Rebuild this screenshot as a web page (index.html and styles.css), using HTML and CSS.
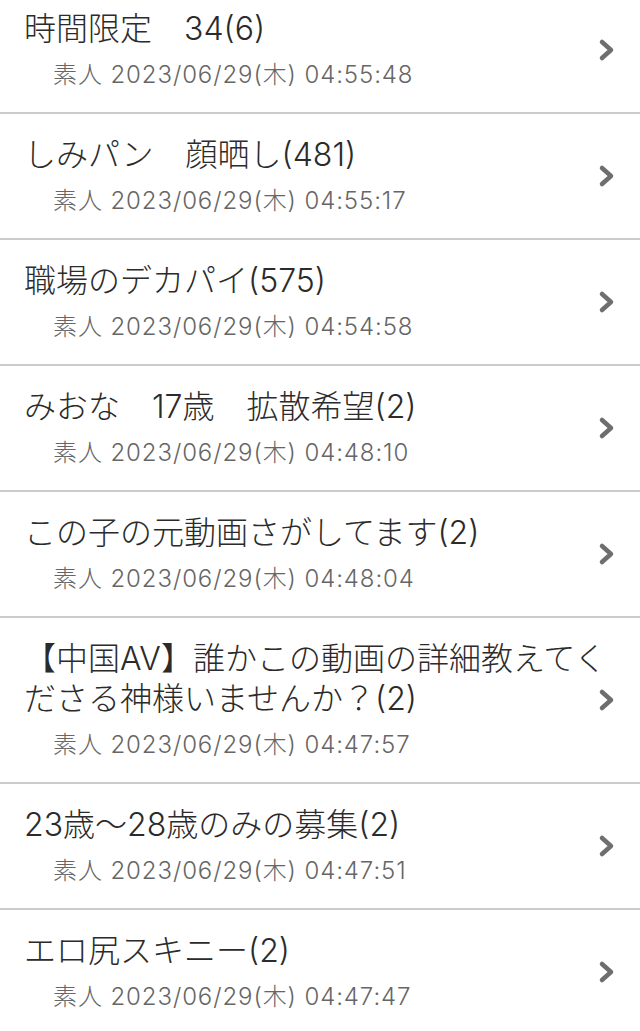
FILE: index.html
```html
<!DOCTYPE html>
<html lang="ja">
<head>
    <meta charset="UTF-8">
    <meta name="viewport" content="width=device-width, initial-scale=1.0">
    <title>スレッド一覧</title>
    <link rel="stylesheet" href="styles.css">
</head>
<body>
    <ul id="thread-list">
        <li class="thread-item">
            <a class="thread-link" href="#">
                <div class="thread-body">
                    <div class="thread-title">時間限定　34(6)</div>
                    <div class="thread-meta">素人 2023/06/29(木) 04:55:48</div>
                </div>
                <svg class="chevron" viewBox="0 0 20 24"><path d="M5 4 L14 12 L5 20"/></svg>
            </a>
        </li>
        <li class="thread-item">
            <a class="thread-link" href="#">
                <div class="thread-body">
                    <div class="thread-title">しみパン　顔晒し(481)</div>
                    <div class="thread-meta">素人 2023/06/29(木) 04:55:17</div>
                </div>
                <svg class="chevron" viewBox="0 0 20 24"><path d="M5 4 L14 12 L5 20"/></svg>
            </a>
        </li>
        <li class="thread-item">
            <a class="thread-link" href="#">
                <div class="thread-body">
                    <div class="thread-title">職場のデカパイ(575)</div>
                    <div class="thread-meta">素人 2023/06/29(木) 04:54:58</div>
                </div>
                <svg class="chevron" viewBox="0 0 20 24"><path d="M5 4 L14 12 L5 20"/></svg>
            </a>
        </li>
        <li class="thread-item">
            <a class="thread-link" href="#">
                <div class="thread-body">
                    <div class="thread-title">みおな　17歳　拡散希望(2)</div>
                    <div class="thread-meta">素人 2023/06/29(木) 04:48:10</div>
                </div>
                <svg class="chevron" viewBox="0 0 20 24"><path d="M5 4 L14 12 L5 20"/></svg>
            </a>
        </li>
        <li class="thread-item">
            <a class="thread-link" href="#">
                <div class="thread-body">
                    <div class="thread-title">この子の元動画さがしてます(2)</div>
                    <div class="thread-meta">素人 2023/06/29(木) 04:48:04</div>
                </div>
                <svg class="chevron" viewBox="0 0 20 24"><path d="M5 4 L14 12 L5 20"/></svg>
            </a>
        </li>
        <li class="thread-item">
            <a class="thread-link" href="#">
                <div class="thread-body">
                    <div class="thread-title">【中国AV】誰かこの動画の詳細教えてくださる神様いませんか？(2)</div>
                    <div class="thread-meta">素人 2023/06/29(木) 04:47:57</div>
                </div>
                <svg class="chevron" viewBox="0 0 20 24"><path d="M5 4 L14 12 L5 20"/></svg>
            </a>
        </li>
        <li class="thread-item">
            <a class="thread-link" href="#">
                <div class="thread-body">
                    <div class="thread-title">23歳〜28歳のみの募集(2)</div>
                    <div class="thread-meta">素人 2023/06/29(木) 04:47:51</div>
                </div>
                <svg class="chevron" viewBox="0 0 20 24"><path d="M5 4 L14 12 L5 20"/></svg>
            </a>
        </li>
        <li class="thread-item">
            <a class="thread-link" href="#">
                <div class="thread-body">
                    <div class="thread-title">エロ尻スキニー(2)</div>
                    <div class="thread-meta">素人 2023/06/29(木) 04:47:47</div>
                </div>
                <svg class="chevron" viewBox="0 0 20 24"><path d="M5 4 L14 12 L5 20"/></svg>
            </a>
        </li>
    </ul>
</body>
</html>
```

FILE: styles.css
```css
body {
    font-family: Inter, "Noto Sans CJK JP", sans-serif;
    font-weight: 300;
    background-color: #fff;
    margin: 0;
    padding: 0;
    overflow: hidden;
}

#thread-list {
    list-style: none;
    margin: -12px 0 0;
    padding: 0;
}

.thread-item {
    border-bottom: 2px solid #cbcbcb;
}

.thread-link {
    display: flex;
    align-items: center;
    padding: 21px 23px 22px 24px;
    color: #333;
    text-decoration: none;
}

.thread-body {
    flex: 1;
    min-width: 0;
}

.thread-title {
    font-size: 32px;
    line-height: 40px;
    color: #2b2b2b;
}

.thread-meta {
    margin-top: 11px;
    padding-left: 29px;
    font-size: 24px;
    line-height: 30px;
    letter-spacing: 0.9px;
    color: #666;
}

/* chevron sits partly over the text column, like the original */
.chevron {
    width: 20px;
    height: 24px;
    margin-left: -12px;
    flex-shrink: 0;
    fill: none;
    stroke: #6e6e6e;
    stroke-width: 4.5;
    stroke-linecap: round;
    stroke-linejoin: round;
}
```
